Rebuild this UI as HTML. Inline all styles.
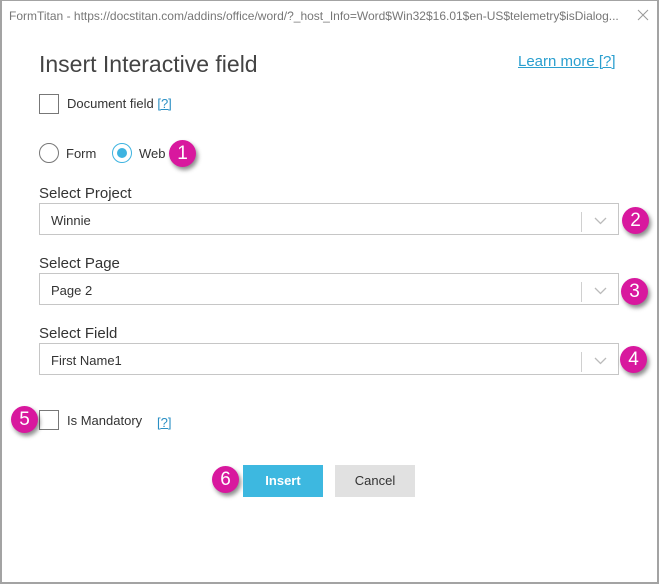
<!DOCTYPE html><html><head><style>
*{margin:0;padding:0;box-sizing:border-box}
body{width:659px;height:584px;background:#fff;font-family:"Liberation Sans",sans-serif;position:relative;overflow:hidden}
.frame{position:absolute;left:0;top:0;width:659px;height:584px;border:2px solid #a3a3a3;border-top:1px solid #a3a3a3}
.a{position:absolute;white-space:nowrap}
.dd{position:absolute;left:39px;width:580px;height:32px;border:1px solid #c6c6c6;font-size:13px;color:#333;padding:9px 0 0 11px}
.dd:after{content:"";position:absolute;right:36px;top:8px;height:20px;border-left:1px solid #d0d0d0}
.dd svg{position:absolute;right:11px;top:13px}
.lbl{font-size:15px;color:#333}
.b{position:absolute;width:27px;height:27px;border-radius:50%;background:#d8189e;color:#fff;font-size:19px;text-align:center;line-height:27px;box-shadow:2px 3px 4px rgba(0,0,0,.45)}
.cb{position:absolute;width:20px;height:20px;border:1px solid #777;background:#fff}
.q{color:#2a8fc4;font-size:13px}
</style></head><body>
<div class="frame"></div>
<div class="a" style="left:9px;top:9px;font-size:12px;color:#777">FormTitan - https://docstitan.com/addins/office/word/?_host_Info=Word$Win32$16.01$en-US$telemetry$isDialog...</div>
<svg class="a" style="left:637px;top:9px" width="12" height="12"><path d="M1 1L11 11M11 1L1 11" stroke="#999" stroke-width="1"/></svg>
<div class="a" style="left:39px;top:51px;font-size:23px;color:#444">Insert Interactive field</div>
<div class="a" style="left:518px;top:53px;font-size:15px;color:#2a9fcf;text-decoration:underline">Learn more [?]</div>
<div class="cb" style="left:39px;top:94px"></div>
<div class="a" style="left:67px;top:96px;font-size:13px;color:#333">Document field <span class="q" style="text-decoration:underline">[?]</span></div>
<div class="a" style="left:39px;top:143px;width:20px;height:20px;border:1px solid #777;border-radius:50%"></div>
<div class="a" style="left:66px;top:146px;font-size:13px;color:#333">Form</div>
<div class="a" style="left:112px;top:143px;width:20px;height:20px;border:1px solid #3db3e0;border-radius:50%"></div>
<div class="a" style="left:117px;top:148px;width:10px;height:10px;background:#3db3e0;border-radius:50%"></div>
<div class="a" style="left:139px;top:146px;font-size:13px;color:#333">Web</div>
<div class="b" style="left:169px;top:140px">1</div>
<div class="a lbl" style="left:39px;top:185px">Select Project</div>
<div class="dd" style="top:203px">Winnie<svg width="13" height="8"><path d="M1 1l5.5 5.5L12 1" fill="none" stroke="#bbb" stroke-width="1.3"/></svg></div>
<div class="b" style="left:622px;top:207px">2</div>
<div class="a lbl" style="left:39px;top:255px">Select Page</div>
<div class="dd" style="top:273px">Page 2<svg width="13" height="8"><path d="M1 1l5.5 5.5L12 1" fill="none" stroke="#bbb" stroke-width="1.3"/></svg></div>
<div class="b" style="left:621px;top:278px">3</div>
<div class="a lbl" style="left:39px;top:325px">Select Field</div>
<div class="dd" style="top:343px">First Name1<svg width="13" height="8"><path d="M1 1l5.5 5.5L12 1" fill="none" stroke="#bbb" stroke-width="1.3"/></svg></div>
<div class="b" style="left:620px;top:346px">4</div>
<div class="cb" style="left:39px;top:410px"></div>
<div class="b" style="left:11px;top:406px">5</div>
<div class="a" style="left:67px;top:413px;font-size:13px;color:#333">Is Mandatory</div>
<div class="a q" style="left:157px;top:415px;text-decoration:underline">[?]</div>
<div class="b" style="left:212px;top:466px">6</div>
<div class="a" style="left:243px;top:465px;width:80px;height:32px;background:#3db8e0;color:#fff;font-size:13px;font-weight:bold;text-align:center;line-height:32px">Insert</div>
<div class="a" style="left:335px;top:465px;width:80px;height:32px;background:#e1e1e1;color:#333;font-size:13px;text-align:center;line-height:32px">Cancel</div>
</body></html>
